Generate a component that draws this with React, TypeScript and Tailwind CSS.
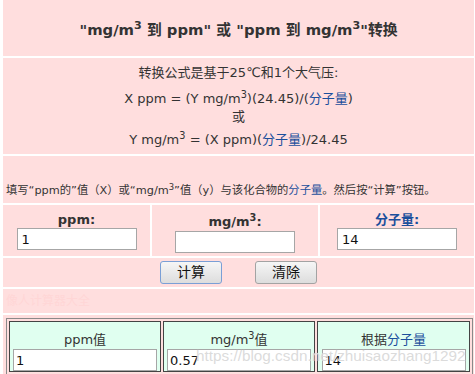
import React from "react";

const font = { fontFamily: '"DejaVu Sans", Verdana, "Noto Sans CJK SC", sans-serif' };

function Blue({ children }: { children: React.ReactNode }) {
  return <span className="text-[#1b4f9c]">{children}</span>;
}

function Field({ value }: { value: string }) {
  return (
    <input
      readOnly
      value={value}
      className="block h-[22px] w-[120px] border border-[#a6a6a6] bg-white px-[4px] text-[13px] font-normal text-[#111] outline-none"
      style={font}
    />
  );
}

function Small({ value }: { value: string }) {
  return (
    <input
      readOnly
      value={value}
      className="block h-[22px] w-[144px] border border-[#a6a6a6] bg-white px-[2px] text-[13px] font-normal text-[#111] outline-none"
      style={font}
    />
  );
}

export default function App() {
  return (
    <div className="relative h-[374px] w-[475px] overflow-hidden bg-white text-[#333]" style={font}>
      <div className="ml-[3px] mr-[1px] flex flex-col gap-[2px]">
        <div className="flex h-[56px] items-center justify-center bg-[#ffdede] pt-[4px] text-[14.8px] font-bold">
          <span>
            "mg/m<sup>3</sup> 到 ppm" 或 "ppm 到 mg/m<sup>3</sup>"转换
          </span>
        </div>

        <div className="flex h-[96px] flex-col items-center bg-[#ffdede] pt-[6px] text-[13px]">
          <div className="h-[17px] leading-[17px]">转换公式是基于25℃和1个大气压:</div>
          <div className="mt-[9px] h-[18px] leading-[18px]">
            X ppm = (Y mg/m<sup>3</sup>)(24.45)/(<Blue>分子量</Blue>)
          </div>
          <div className="h-[17px] leading-[17px]">或</div>
          <div className="mt-[6px] h-[18px] leading-[18px]">
            Y mg/m<sup>3</sup> = (X ppm)(<Blue>分子量</Blue>)/24.45
          </div>
        </div>

        <div className="flex h-[47px] items-end bg-[#ffdede] pb-[3px] pl-[3px] text-[11.3px] leading-[18px]">
          <span className="whitespace-nowrap">
            填写“ppm的”值（X）或“mg/m<sup>3</sup>”值（y）与该化合物的<Blue>分子量</Blue>。然后按“计算”按钮。
          </span>
        </div>

        <div className="flex h-[51px] gap-[2px] text-[13px] font-bold">
          <div className="flex w-[147px] flex-col items-center bg-[#ffdede] pt-[6px]">
            <div className="h-[17px] leading-[17px]">ppm:</div>
            <Field value="1" />
          </div>
          <div className="flex w-[166px] flex-col items-center bg-[#ffdede] pt-[6px]">
            <div className="h-[20px] leading-[22px]">
              mg/m<sup>3</sup>:
            </div>
            <Field value="" />
          </div>
          <div className="flex flex-1 flex-col items-center bg-[#ffdede] pt-[6px]">
            <div className="h-[17px] leading-[17px] text-[#1b4f9c]">分子量:</div>
            <Field value="14" />
          </div>
        </div>

        <div className="flex h-[29px] items-center justify-center gap-[33px] bg-[#ffdede] text-[14px]">
          <button className="h-[23px] w-[62px] rounded-[3px] border border-[#7a9fd6] bg-gradient-to-b from-[#f6f6f6] to-[#dddddd] text-[#111]">
            计算
          </button>
          <button className="h-[23px] w-[62px] rounded-[3px] border border-[#a3a3a3] bg-gradient-to-b from-[#f6f6f6] to-[#dddddd] text-[#111]">
            清除
          </button>
        </div>

        <div className="flex h-[24px] items-center bg-[#ffdede] pl-[3px] text-[12px] text-[#ffd6d6]">像人计算器大全</div>

        <div className="h-[70px] bg-[#ffdede] pl-[3px] pt-[3px]">
          <div className="flex w-[467px] gap-[2px] border border-[#8a8a8a] p-[2px] text-[13px]">
            <div className="flex w-[152px] flex-col items-center border border-[#444] bg-[#e0fff0] pt-[9px]">
              <div className="h-[18px] leading-[18px]">ppm值</div>
              <Small value="1" />
            </div>
            <div className="flex w-[152px] flex-col items-center border border-[#444] bg-[#e0fff0] pt-[9px]">
              <div className="h-[18px] leading-[18px]">
                mg/m<sup>3</sup>值
              </div>
              <Small value="0.57" />
            </div>
            <div className="flex flex-1 flex-col items-center border border-[#444] bg-[#e0fff0] pt-[9px]">
              <div className="h-[18px] leading-[18px]">
                根据<Blue>分子量</Blue>
              </div>
              <Small value="14" />
            </div>
          </div>
        </div>
      </div>

      <div
        className="pointer-events-none absolute left-[196px] top-[345px] whitespace-nowrap text-[15.3px] text-[#d2d2d2]/80"
        style={{ fontFamily: '"Liberation Sans", Arial, sans-serif', textShadow: "0 0 1px rgba(255,255,255,0.9)" }}
      >
        https://blog.csdn.net/zhuisaozhang1292
      </div>
    </div>
  );
}
